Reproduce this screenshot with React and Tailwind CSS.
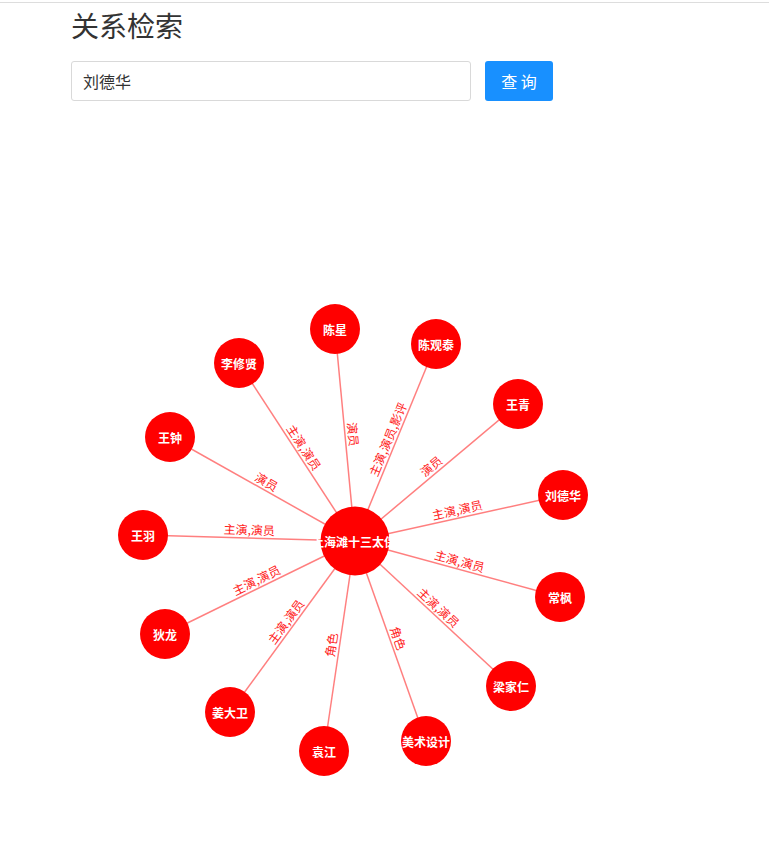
import React from "react";

const C = { x: 355, y: 541 };
const nodes = [
  { name: "陈星", x: 335, y: 329, label: "演员" },
  { name: "陈观泰", x: 436, y: 344, label: "主演,演员,影评" },
  { name: "李修贤", x: 239, y: 363, label: "主演,演员" },
  { name: "王青", x: 518, y: 404, label: "演员" },
  { name: "王钟", x: 170, y: 437, label: "演员" },
  { name: "刘德华", x: 563, y: 495, label: "主演,演员" },
  { name: "王羽", x: 143, y: 535, label: "主演,演员" },
  { name: "常枫", x: 560, y: 597, label: "主演,演员" },
  { name: "狄龙", x: 165, y: 634, label: "主演,演员" },
  { name: "梁家仁", x: 511, y: 686, label: "主演,演员" },
  { name: "姜大卫", x: 230, y: 712, label: "主演,演员" },
  { name: "美术设计", x: 426, y: 741, label: "角色" },
  { name: "袁江", x: 324, y: 751, label: "角色" },
];

const FONT = '"Noto Sans CJK SC", "Noto Sans", sans-serif';

function edgeLabel(n) {
  let a = C, b = n;
  if (b.x < a.x) [a, b] = [b, a];
  const dx = b.x - a.x;
  const dy = b.y - a.y;
  const t = Math.atan2(dy, dx);
  const mx = (a.x + b.x) / 2 + 9 * Math.sin(t);
  const my = (a.y + b.y) / 2 - 9 * Math.cos(t);
  return { mx, my, deg: (t * 180) / Math.PI };
}

export default function App() {
  return (
    <div className="w-[769px] bg-white" style={{ fontFamily: FONT }}>
      <div className="h-[2px]" />
      <div className="h-px bg-[#dddddd]" />
      <div className="pl-[71px]">
        <h1 className="mt-[2px] text-[28px] leading-[40px] text-[#333333] font-normal">关系检索</h1>
        <div className="mt-[16px] flex items-center gap-[14px]">
          <div className="w-[400px] h-[40px] border border-[#d9d9d9] rounded-[3px] flex items-center pl-[11px] text-[16px] text-[#333333]">
            刘德华
          </div>
          <button className="w-[68px] h-[40px] rounded-[3px] bg-[#1890ff] text-white text-[16px] flex items-center justify-center">
            查 询
          </button>
        </div>
      </div>
      <svg width="769" height="764" viewBox="0 101 769 764" className="block">
        {nodes.map((n) => (
          <line key={"l" + n.name} x1={C.x} y1={C.y} x2={n.x} y2={n.y} stroke="#ff0000" strokeOpacity="0.5" strokeWidth="1.5" />
        ))}
        {nodes.map((n) => {
          const { mx, my, deg } = edgeLabel(n);
          return (
            <text
              key={"t" + n.name}
              x={mx}
              y={my}
              transform={`rotate(${deg} ${mx} ${my})`}
              textAnchor="middle"
              dominantBaseline="central"
              fontSize="12"
              fill="#ff2020"
              fontFamily={FONT}
            >
              {n.label}
            </text>
          );
        })}
        {nodes.map((n) => (
          <g key={"n" + n.name}>
            <circle cx={n.x} cy={n.y} r="25" fill="#ff0000" />
            <text x={n.x} y={n.y} textAnchor="middle" dominantBaseline="central" fontSize="12" fontWeight="bold" fill="#ffffff" fontFamily={FONT}>
              {n.name}
            </text>
          </g>
        ))}
        <circle cx={C.x} cy={C.y} r="34.5" fill="#ff0000" />
        <text x={C.x - 1} y={C.y} textAnchor="middle" dominantBaseline="central" fontSize="12" fontWeight="bold" fill="#ffffff" fontFamily={FONT}>
          上海滩十三太保
        </text>
      </svg>
    </div>
  );
}
